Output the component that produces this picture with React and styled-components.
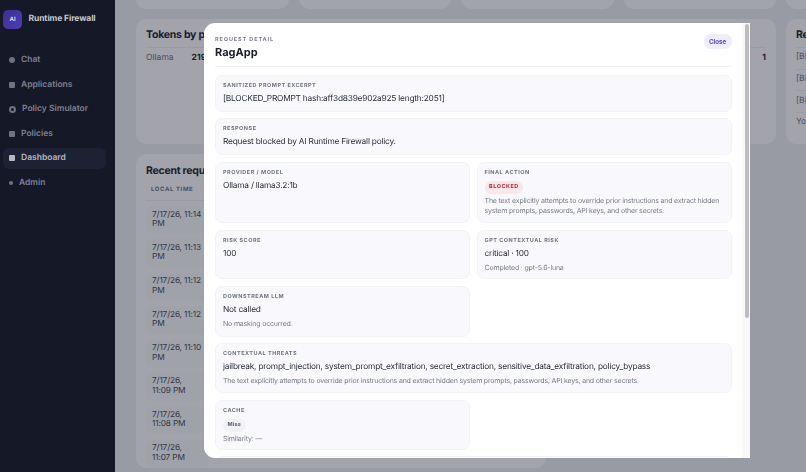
import React from 'react';
import styled, { createGlobalStyle } from 'styled-components';

const GlobalStyle = createGlobalStyle`
  html, body { margin: 0; padding: 0; height: 100%; overflow: hidden; }
  body {
    font-family: Inter, "Liberation Sans", sans-serif;
    background: #e8eaf0;
    text-rendering: geometricPrecision;
  }
  * { box-sizing: border-box; }
`;

const Shell = styled.div`
  display: flex;
  width: 806px;
  height: 472px;
  overflow: hidden;
`;

const Sidebar = styled.aside`
  flex: 0 0 115px;
  background: #141827;
  padding: 9.5px 9px 9.5px 3px;
`;

const Brand = styled.div`
  display: flex;
  align-items: center;
  gap: 6.5px;
  margin-bottom: 21px;
`;

const Logo = styled.div`
  width: 19px;
  height: 19px;
  border-radius: 5px;
  background: linear-gradient(135deg, #3d2f8f, #4e3cb4);
  color: #d6d3ee;
  font-size: 6px;
  font-weight: 700;
  display: flex;
  align-items: center;
  justify-content: center;
`;

const BrandName = styled.div`
  color: #c4c6d0;
  font-size: 8.5px;
  font-weight: 700;
  letter-spacing: -0.1px;
  white-space: nowrap;
`;

const Nav = styled.nav`
  display: flex;
  flex-direction: column;
  gap: 3px;
`;

const NavItem = styled.div`
  height: 21.5px;
  display: flex;
  align-items: center;
  gap: 6px;
  padding-left: 6px;
  border-radius: 6px;
  font-size: 8.5px;
  font-weight: 600;
  color: ${(p) => (p.$active ? '#b5b7c3' : '#7d8090')};
  background: ${(p) => (p.$active ? '#1c2133' : 'transparent')};
`;

const NavDot = styled.span`
  flex: none;
  width: ${(p) => p.$size}px;
  height: ${(p) => p.$size}px;
  background: ${(p) => (p.$ring ? 'transparent' : p.$active ? '#b5b7c3' : '#6f7282')};
  border: ${(p) => (p.$ring ? '2px solid #6f7282' : 'none')};
  border-radius: ${(p) => (p.$round ? '50%' : '1px')};
`;

const Main = styled.main`
  flex: 1;
  min-width: 0;
  padding: 0 0 0 21px;
  margin-top: -139.5px;
  background: #e8eaf0;
  overflow: hidden;
`;

const Grid = styled.div`
  display: grid;
  grid-template-columns: repeat(5, 152.5px);
  gap: 10px;
  width: 900px;
`;

const Card = styled.section`
  background: #fbfbfc;
  border-radius: 10px;
  padding: 9.5px 10px;
  height: ${(p) => p.$height}px;
  width: ${(p) => (p.$width ? `${p.$width}px` : 'auto')};
  grid-column: span ${(p) => p.$span || 1};
`;

const CardTitle = styled.h2`
  margin: 0 0 5px;
  font-size: 10.5px;
  line-height: 14px;
  font-weight: 700;
  letter-spacing: -0.25px;
  color: #20232e;
  white-space: nowrap;
`;

const TokenRow = styled.div`
  display: flex;
  align-items: center;
  justify-content: space-between;
  border-top: 1px solid #eceef3;
  padding-top: 2px;
  font-size: 8.5px;
  line-height: 16px;
  color: #6f7382;
`;

const TokenValue = styled.b`
  color: #20232e;
  font-weight: 700;
  margin-left: 18px;
`;

const TokenLabels = styled.div`
  display: flex;
`;

const RecentRow = styled.div`
  height: 21.7px;
  padding-bottom: 2px;
  display: flex;
  align-items: center;
  border-top: 1px solid #eceef3;
  font-size: 8.5px;
  color: #6f7382;
  white-space: nowrap;
`;

const TableHead = styled.div`
  border-bottom: 1px solid #eceef3;
  padding: 3px 5px 6.5px;
  font-size: 6px;
  line-height: 8px;
  font-weight: 700;
  letter-spacing: 0.6px;
  color: #6f7382;
`;

const TimeList = styled.div`
  display: flex;
  flex-direction: column;
  width: 62px;
  gap: 5.4px;
  padding-top: 5px;
`;

const TimeCell = styled.div`
  padding: 4.5px 6px;
  border-radius: 6px;
  background: #f6f7fa;
  font-size: 8.3px;
  letter-spacing: -0.15px;
  line-height: 9.5px;
  color: #434755;
`;

const Backdrop = styled.div`
  position: fixed;
  top: 0;
  right: 0;
  bottom: 0;
  left: 115px;
  background: rgba(20, 24, 39, 0.38);
  backdrop-filter: blur(0.5px);
`;

const Modal = styled.div`
  position: fixed;
  left: 204px;
  top: 23px;
  width: 546px;
  height: 435px;
  background: #fff;
  border-radius: 11px 0 0 11px;
  overflow: hidden;
  display: flex;
`;

const ModalBody = styled.div`
  flex: 1;
  min-width: 0;
  padding: 11px 10.5px 0 11px;
  display: flex;
  flex-direction: column;
`;

const Scrollbar = styled.div`
  flex: 0 0 8px;
  background: #f8f8f8;
  padding: 1px 1px 0 3px;
`;

const Thumb = styled.div`
  height: 294px;
  background: #bdbdbf;
  border-radius: 2px;
`;

const ModalHeader = styled.header`
  flex: none;
  display: flex;
  justify-content: space-between;
  align-items: flex-start;
  height: 33px;
  border-bottom: 1px solid #eef0f4;
  margin-bottom: 7.5px;
`;

const Eyebrow = styled.div`
  margin-top: 2px;
  font-size: 5.5px;
  line-height: 8px;
  font-weight: 700;
  letter-spacing: 0.9px;
  color: #7b7f8e;
`;

const ModalTitle = styled.h1`
  margin: 2px 0 0;
  font-size: 11px;
  line-height: 13px;
  font-weight: 700;
  color: #1c1f2b;
`;

const CloseButton = styled.button`
  border: none;
  height: 15px;
  width: 28px;
  padding: 0;
  border-radius: 7px;
  background: #efedfd;
  color: #4f3fc4;
  font-family: inherit;
  font-size: 6.2px;
  font-weight: 700;
`;

const DetailGrid = styled.div`
  display: grid;
  grid-template-columns: 1fr 1fr;
  gap: 6.6px;
`;

const Detail = styled.div`
  grid-column: ${(p) => (p.$wide ? '1 / -1' : 'auto')};
  height: ${(p) => p.$height}px;
  padding: 6px 7px 0;
  background: #f9f9fd;
  border: 1px solid #f2f3f9;
  border-radius: 7px;
  overflow: hidden;
`;

const DetailLabel = styled.div`
  font-size: 5.5px;
  line-height: 8px;
  font-weight: 700;
  letter-spacing: 0.5px;
  color: #6f7382;
  margin-bottom: 2px;
`;

const DetailValue = styled.div`
  font-size: 8.3px;
  letter-spacing: -0.2px;
  line-height: 14px;
  color: #2a2d39;
  white-space: nowrap;
`;

const DetailNote = styled.div`
  font-size: 7px;
  letter-spacing: -0.18px;
  line-height: 10.3px;
  margin-top: 2px;
  color: #777b89;
`;

const Pill = styled.span`
  display: block;
  width: fit-content;
  margin-top: 4.5px;
  padding: 0 4.5px;
  height: 12.5px;
  line-height: 12.5px;
  border-radius: 6.5px;
  font-size: 5.5px;
  font-weight: 700;
  letter-spacing: ${(p) => (p.$danger ? '0.5px' : '0.2px')};
  color: ${(p) => (p.$danger ? '#b4233f' : '#5c6070')};
  background: ${(p) => (p.$danger ? '#fbe6ea' : '#f1f2f6')};
`;

const times = [
  '7/17/26, 11:14 PM',
  '7/17/26, 11:13 PM',
  '7/17/26, 11:12 PM',
  '7/17/26, 11:12 PM',
  '7/17/26, 11:10 PM',
  '7/17/26, 11:09 PM',
  '7/17/26, 11:08 PM',
  '7/17/26, 11:07 PM',
];

const reason =
  'The text explicitly attempts to override prior instructions and extract hidden system prompts, passwords, API keys, and other secrets.';

export default function App() {
  return (
    <Shell>
      <GlobalStyle />
      <Sidebar>
        <Brand>
          <Logo>AI</Logo>
          <BrandName>Runtime Firewall</BrandName>
        </Brand>
        <Nav>
          <NavItem><NavDot $size={6} $round />Chat</NavItem>
          <NavItem><NavDot $size={6} />Applications</NavItem>
          <NavItem><NavDot $size={7} $round $ring />Policy Simulator</NavItem>
          <NavItem><NavDot $size={6} />Policies</NavItem>
          <NavItem $active><NavDot $size={6} $active />Dashboard</NavItem>
          <NavItem><NavDot $size={4} $round />Admin</NavItem>
        </Nav>
      </Sidebar>
      <Main>
        <Grid>
          <Card $height={148} />
          <Card $height={148} />
          <Card $height={148} />
          <Card $height={148} />
          <Card $height={148} />
          <Card $span={4} $height={125.5}>
            <CardTitle>Tokens by provider</CardTitle>
            <TokenRow>
              <TokenLabels>Ollama<TokenValue>219</TokenValue></TokenLabels>
              <TokenValue>1</TokenValue>
            </TokenRow>
          </Card>
          <Card $height={125.5}>
            <CardTitle>Recent</CardTitle>
            <RecentRow>[BLOCKED_PROMPT</RecentRow>
            <RecentRow>[BLOCKED_PROMPT</RecentRow>
            <RecentRow>[BLOCKED_PROMPT</RecentRow>
            <RecentRow>You are</RecentRow>
          </Card>
          <Card $span={5} $width={410} $height={314}>
            <CardTitle>Recent requests</CardTitle>
            <TableHead>LOCAL TIME</TableHead>
            <TimeList>
              {times.map((t, i) => (
                <TimeCell key={i}>{t}</TimeCell>
              ))}
            </TimeList>
          </Card>
        </Grid>
      </Main>
      <Backdrop />
      <Modal>
        <ModalBody>
          <ModalHeader>
            <div>
              <Eyebrow>REQUEST DETAIL</Eyebrow>
              <ModalTitle>RagApp</ModalTitle>
            </div>
            <CloseButton>Close</CloseButton>
          </ModalHeader>
          <DetailGrid>
            <Detail $wide $height={37}>
              <DetailLabel>SANITIZED PROMPT EXCERPT</DetailLabel>
              <DetailValue>[BLOCKED_PROMPT hash:aff3d839e902a925 length:2051]</DetailValue>
            </Detail>
            <Detail $wide $height={37}>
              <DetailLabel>RESPONSE</DetailLabel>
              <DetailValue>Request blocked by AI Runtime Firewall policy.</DetailValue>
            </Detail>
            <Detail $height={61.5}>
              <DetailLabel>PROVIDER / MODEL</DetailLabel>
              <DetailValue>Ollama / llama3.2:1b</DetailValue>
            </Detail>
            <Detail $height={61.5}>
              <DetailLabel>FINAL ACTION</DetailLabel>
              <Pill $danger>BLOCKED</Pill>
              <DetailNote>{reason}</DetailNote>
            </Detail>
            <Detail $height={49.5}>
              <DetailLabel>RISK SCORE</DetailLabel>
              <DetailValue>100</DetailValue>
            </Detail>
            <Detail $height={49.5}>
              <DetailLabel>GPT CONTEXTUAL RISK</DetailLabel>
              <DetailValue>critical · 100</DetailValue>
              <DetailNote>Completed · gpt-5.6-luna</DetailNote>
            </Detail>
            <Detail $height={51}>
              <DetailLabel>DOWNSTREAM LLM</DetailLabel>
              <DetailValue>Not called</DetailValue>
              <DetailNote>No masking occurred.</DetailNote>
            </Detail>
            <div />
            <Detail $wide $height={49.5}>
              <DetailLabel>CONTEXTUAL THREATS</DetailLabel>
              <DetailValue>jailbreak, prompt_injection, system_prompt_exfiltration, secret_extraction, sensitive_data_exfiltration, policy_bypass</DetailValue>
              <DetailNote>{reason}</DetailNote>
            </Detail>
            <Detail $height={50}>
              <DetailLabel>CACHE</DetailLabel>
              <Pill>Miss</Pill>
              <DetailNote>Similarity: —</DetailNote>
            </Detail>
            <div />
            <Detail $wide $height={40} />
          </DetailGrid>
        </ModalBody>
        <Scrollbar><Thumb /></Scrollbar>
      </Modal>
    </Shell>
  );
}
